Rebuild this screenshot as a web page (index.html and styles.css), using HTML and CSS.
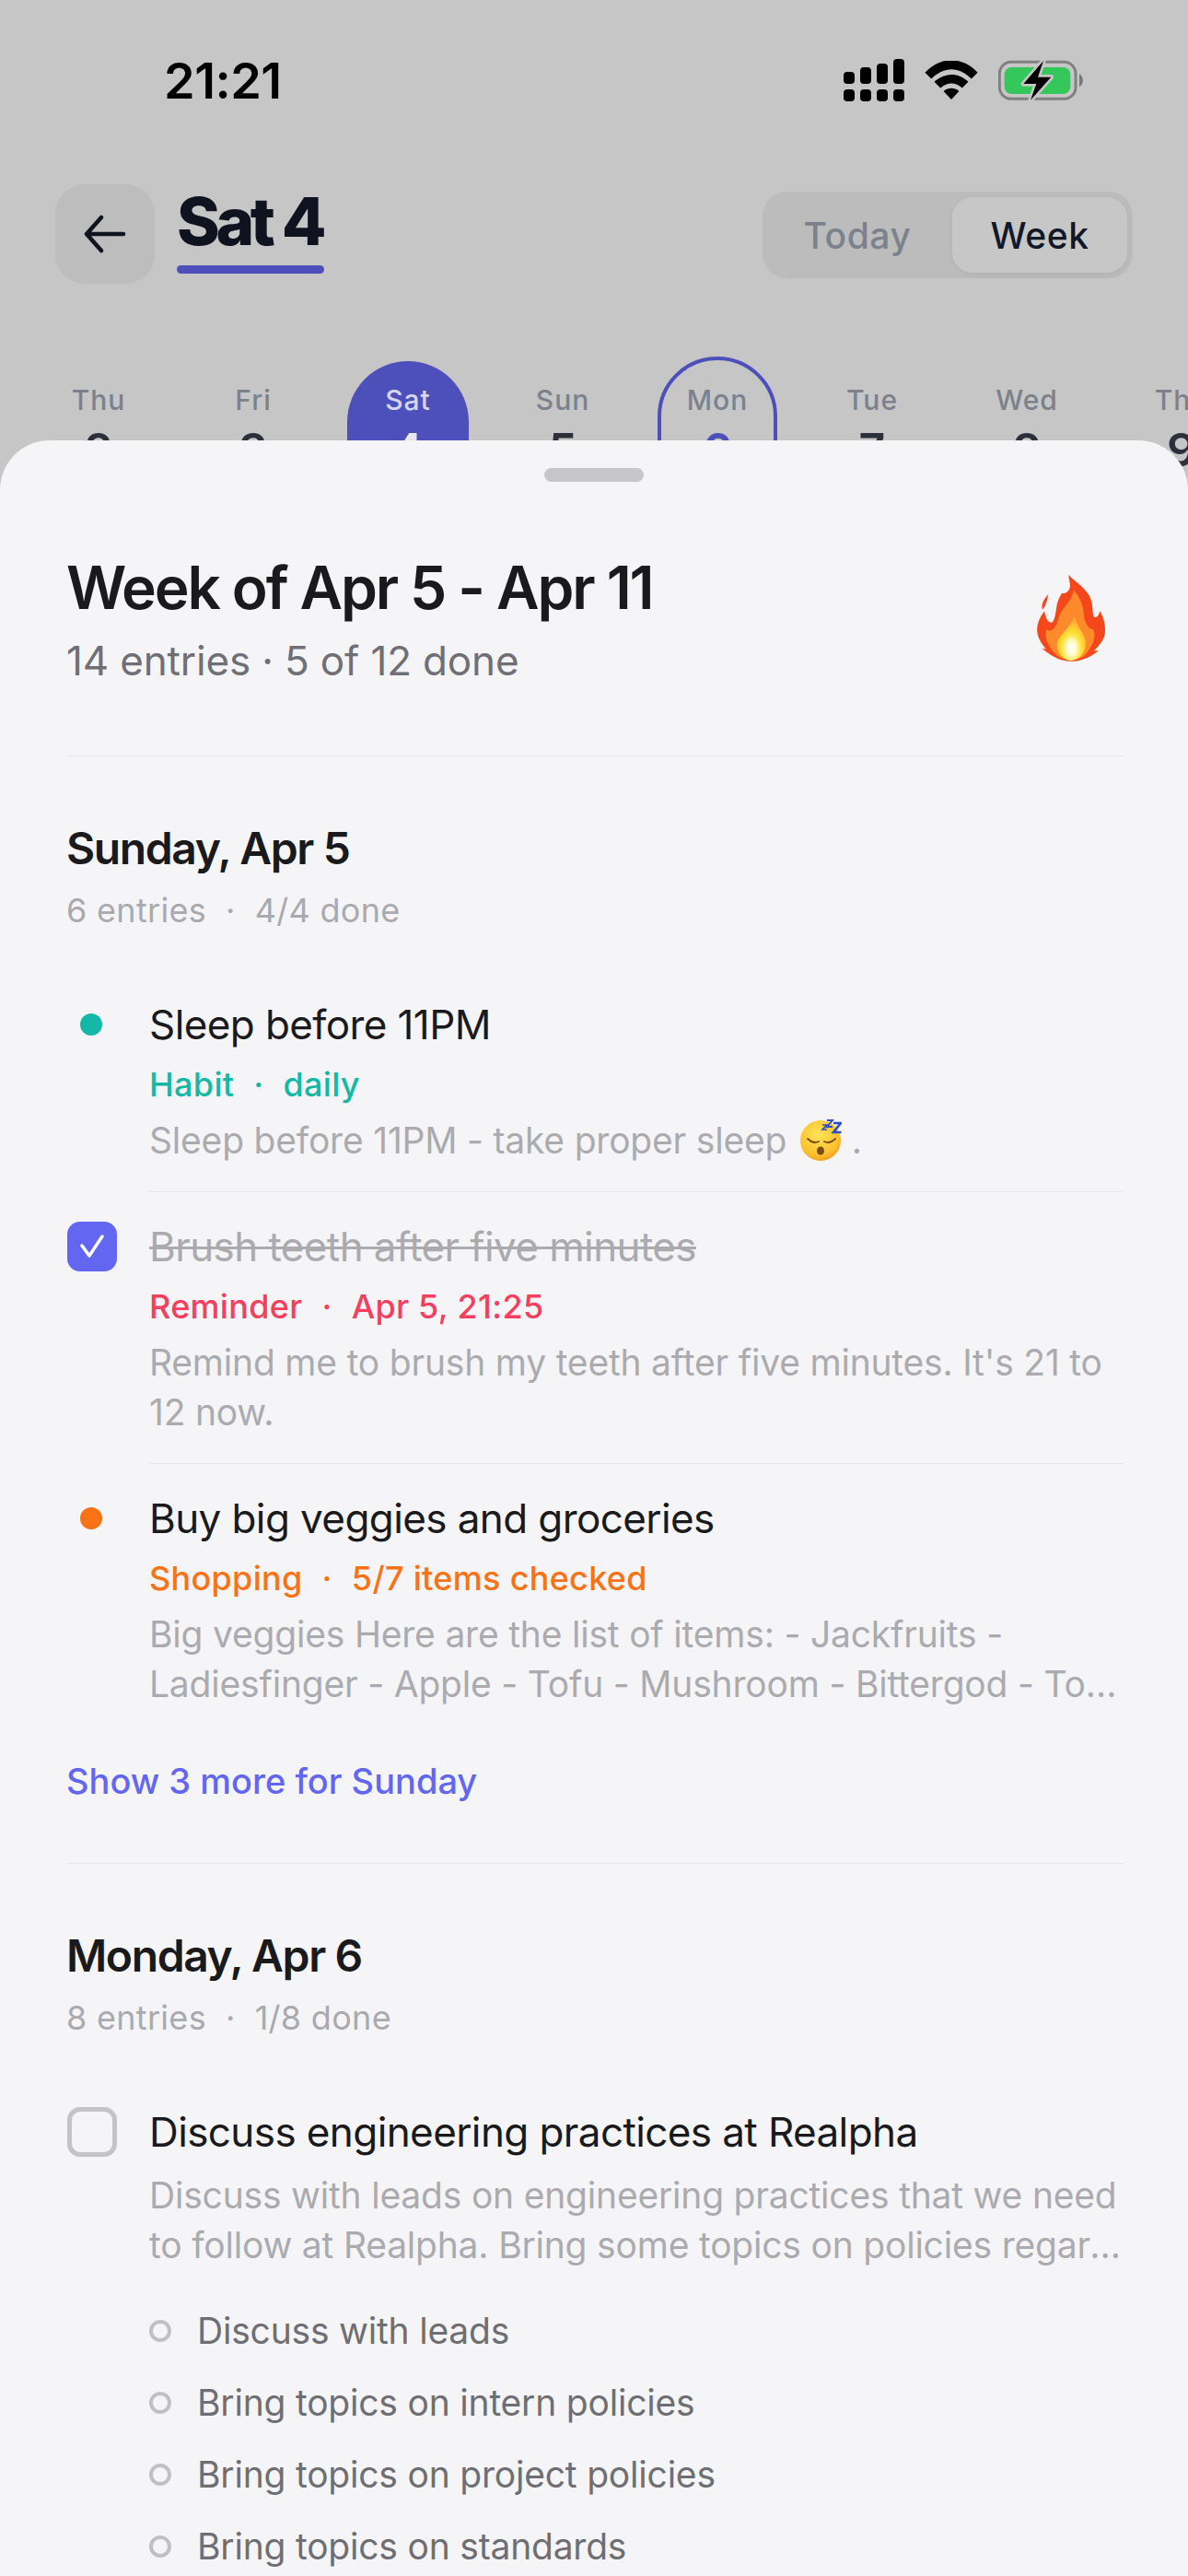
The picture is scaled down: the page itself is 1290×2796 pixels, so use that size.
FILE: index.html
```html
<!DOCTYPE html>
<html lang="en">
<head>
<meta charset="utf-8">
<title>Week</title>
<link rel="stylesheet" href="styles.css">
</head>
<body>
<div class="backdrop">
  <div class="status">
    <span class="time">21:21</span>
    <div class="status-icons">
      <svg class="signal" width="66" height="46" viewBox="0 0 66 46"><g fill="#000"><rect x="0" y="14" width="12" height="13" rx="4"/><rect x="18" y="9" width="12" height="18" rx="4"/><rect x="36" y="5" width="12" height="22" rx="4"/><rect x="54" y="0" width="12" height="27" rx="4"/><rect x="0" y="33" width="12" height="13" rx="4"/><rect x="18" y="33" width="12" height="13" rx="4"/><rect x="36" y="33" width="12" height="13" rx="4"/><rect x="54" y="33" width="12" height="13" rx="4"/></g></svg>
      <svg class="wifi" width="58" height="42" viewBox="492 75 170 125"><g fill="#000"><path d="M492 113C540 60 615 60 662 113L642 133C600 92 555 92 512 133Z"/><path d="M522 143C555 112 600 112 632 143L612 163C590 143 565 143 542 163Z"/><path d="M552 173C567 160 587 160 602 173L577 200Z"/></g></svg>
      <svg class="battery" width="93" height="44" viewBox="733 72 279 132"><rect x="737" y="79" width="248" height="120" rx="38" fill="none" stroke="#808080" stroke-width="9"/><rect x="753" y="96" width="215" height="87" rx="24" fill="#34c759"/><path d="M997 118C1012 125 1012 152 997 160Z" fill="#777"/><path d="M880 75L815 150H857L838 203L905 128H862Z" fill="#000" stroke="#c6c6c6" stroke-width="16" stroke-linejoin="round" paint-order="stroke"/></svg>
    </div>
  </div>
  <div class="topbar">
    <div class="back">
      <svg width="48" height="48" viewBox="0 0 48 48" fill="none" stroke="#0f1320" stroke-width="4.5" stroke-linecap="round" stroke-linejoin="round"><path d="M44 24H4M20 6L4 24L20 42"/></svg>
    </div>
    <div class="day-title">
      <span class="day-title-text">Sat 4</span>
      <span class="day-title-bar"></span>
    </div>
    <div class="segment">
      <span class="seg-item">Today</span>
      <span class="seg-item seg-item--active">Week</span>
    </div>
  </div>
  <div class="strip">
    <div class="day"><span class="day-name">Thu</span><span class="day-num">2</span></div>
    <div class="day"><span class="day-name">Fri</span><span class="day-num">3</span></div>
    <div class="day day--selected"><span class="day-name">Sat</span><span class="day-num">4</span></div>
    <div class="day"><span class="day-name">Sun</span><span class="day-num">5</span></div>
    <div class="day day--today"><span class="day-name">Mon</span><span class="day-num">6</span></div>
    <div class="day"><span class="day-name">Tue</span><span class="day-num">7</span></div>
    <div class="day"><span class="day-name">Wed</span><span class="day-num">8</span></div>
    <div class="day"><span class="day-name">Thu</span><span class="day-num">9</span></div>
  </div>
</div>

<main class="sheet">
  <div class="handle"></div>
  <header class="sheet-head">
    <div>
      <h1 class="sheet-title">Week of Apr 5 - Apr 11</h1>
      <p class="sheet-sub">14 entries · 5 of 12 done</p>
    </div>
    <svg class="fire" width="77" height="95" viewBox="135 68 232 288">
      <defs>
        <radialGradient id="fireCore" cx="0.5" cy="0.72" r="0.62"><stop offset="0" stop-color="#ffffff"/><stop offset="0.28" stop-color="#fffbc8"/><stop offset="0.55" stop-color="#ffe234"/><stop offset="1" stop-color="#ffae2e"/></radialGradient>
      </defs>
      <path fill="#f4481c" d="M242 70C250 85 290 105 310 140C325 170 318 200 325 210C335 212 340 205 345 190C360 215 365 250 360 270C352 295 335 310 325 320L340 320C310 345 280 355 250 355C215 355 185 340 153 312L168 316C150 295 135 270 138 245C140 225 150 205 162 190C165 210 172 228 185 228C195 225 198 200 203 170C208 150 215 135 222 130C228 135 240 128 245 115C250 100 240 85 242 70Z"/>
      <path fill="#f4481c" d="M175 135C172 150 165 180 155 185C150 170 160 150 175 135Z"/>
      <path fill="#ff8a2b" d="M258 120C275 140 292 170 292 205C295 235 312 250 322 250C335 275 320 310 290 340C265 352 225 352 205 338C180 315 160 285 168 250C180 262 200 250 208 215C215 180 250 165 258 120Z"/>
      <path fill="url(#fireCore)" d="M262 208C268 245 300 265 298 300C296 330 275 352 250 353C222 352 202 330 204 298C206 270 235 260 262 208Z"/>
    </svg>
  </header>
  <div class="rule"></div>

  <section class="group">
    <h2 class="group-title">Sunday, Apr 5</h2>
    <p class="group-meta">6 entries<span class="sep">·</span>4/4 done</p>
    <div class="entries">
      <article class="entry">
        <div class="marker"><span class="dot dot--teal"></span></div>
        <div class="entry-body">
          <h3 class="entry-title">Sleep before 11PM</h3>
          <p class="tag tag--teal">Habit<span class="sep">·</span>daily</p>
          <p class="desc">Sleep before 11PM - take proper sleep <svg class="sleepy" width="45" height="46" viewBox="0 0 45 46"><defs><radialGradient id="face" cx="0.45" cy="0.35" r="0.7"><stop offset="0" stop-color="#ffe35a"/><stop offset="0.7" stop-color="#fdc22f"/><stop offset="1" stop-color="#f29a1c"/></radialGradient></defs><circle cx="22" cy="24" r="22" fill="url(#face)"/><g fill="none" stroke="#7a4a12" stroke-width="1.8" stroke-linecap="round"><path d="M8 22Q14 28 20 25"/><path d="M26 25Q32 28 38 22"/></g><ellipse cx="22" cy="35" rx="4" ry="4.5" fill="#7a4a12"/><g fill="none" stroke="#2a4fc9" stroke-linejoin="miter"><path d="M24 7H29L24 12H29" stroke-width="1.6"/><path d="M29 2H35L29 9H35" stroke-width="1.9"/><path d="M36 5H44L36 15H44.5" stroke-width="2.6"/></g></svg> .</p>
        </div>
      </article>
      <article class="entry entry--done">
        <div class="marker"><span class="check check--on"><svg width="26" height="26" viewBox="0 0 26 26" fill="none" stroke="#fff" stroke-width="3.5" stroke-linecap="round" stroke-linejoin="round"><path d="M2 12L10 23L24 2"/></svg></span></div>
        <div class="entry-body">
          <h3 class="entry-title entry-title--struck">Brush teeth after five minutes</h3>
          <p class="tag tag--red">Reminder<span class="sep">·</span>Apr 5, 21:25</p>
          <p class="desc">Remind me to brush my teeth after five minutes. It's 21 to 12 now.</p>
        </div>
      </article>
      <article class="entry">
        <div class="marker"><span class="dot dot--orange"></span></div>
        <div class="entry-body">
          <h3 class="entry-title">Buy big veggies and groceries</h3>
          <p class="tag tag--orange">Shopping<span class="sep">·</span>5/7 items checked</p>
          <p class="desc"><span class="desc-line">Big veggies Here are the list of items: - Jackfruits -</span><span class="desc-line">Ladiesfinger - Apple - Tofu - Mushroom - Bittergod - Tomatoes - Onions</span></p>
        </div>
      </article>
    </div>
    <p class="more">Show 3 more for Sunday</p>
  </section>
  <div class="rule rule--after-group"></div>

  <section class="group">
    <h2 class="group-title">Monday, Apr 6</h2>
    <p class="group-meta">8 entries<span class="sep">·</span>1/8 done</p>
    <div class="entries">
      <article class="entry">
        <div class="marker"><span class="check"></span></div>
        <div class="entry-body">
          <h3 class="entry-title">Discuss engineering practices at Realpha</h3>
          <p class="desc"><span class="desc-line">Discuss with leads on engineering practices that we need</span><span class="desc-line">to follow at Realpha. Bring some topics on policies regarding the interns</span></p>
          <ul class="subs">
            <li class="sub">Discuss with leads</li>
            <li class="sub">Bring topics on intern policies</li>
            <li class="sub">Bring topics on project policies</li>
            <li class="sub">Bring topics on standards</li>
          </ul>
        </div>
      </article>
    </div>
  </section>
</main>
</body>
</html>
```

FILE: styles.css
```css
*, *::before { box-sizing: border-box; }
html, body { margin: 0; padding: 0; }
body {
  width: 1290px;
  height: 2796px;
  overflow: hidden;
  background: #c6c6c6;
  font-family: Inter, "Noto Sans", sans-serif;
}
h1, h2, h3, p, ul { margin: 0; padding: 0; }

.backdrop { height: 478px; }

.status {
  height: 176px;
  display: flex;
  align-items: center;
  justify-content: space-between;
  padding: 0 113px 2px 178px;
}
.time { font-size: 54px; font-weight: 600; color: #000; letter-spacing: -0.5px; }
.status-icons { display: flex; align-items: center; gap: 22px; }

.topbar {
  margin-top: 24px;
  height: 108px;
  padding: 0 60px 0 60px;
  display: flex;
  align-items: flex-start;
}
.back {
  width: 108px;
  height: 108px;
  border-radius: 32px;
  background: #bdbdbd;
  display: flex;
  align-items: center;
  justify-content: center;
}
.day-title { margin-left: 24px; width: 160px; display: flex; flex-direction: column; }
.day-title-text {
  font-size: 71px;
  line-height: 80px;
  font-weight: 800;
  letter-spacing: -4.4px;
  color: #0f1320;
  white-space: nowrap;
}
.day-title-bar { margin-top: 8px; height: 9px; border-radius: 5px; background: #4d4fbb; }
.segment {
  margin-left: auto;
  margin-top: 8px;
  width: 402px;
  height: 94px;
  padding: 6px 6px 6px 0;
  border-radius: 26px;
  background: #bcbcbc;
  display: flex;
}
.seg-item {
  flex: 1;
  display: flex;
  align-items: center;
  justify-content: center;
  font-size: 39px;
  font-weight: 500;
  letter-spacing: 0.6px;
  color: #7b818d;
}
.seg-item--active {
  flex: 0 0 190px;
  border-radius: 22px;
  background: #c7c7c7;
  color: #111827;
  box-shadow: 0 2px 6px rgba(0, 0, 0, 0.06);
}

.strip {
  margin-top: 84px;
  padding-left: 41px;
  display: flex;
  gap: 36px;
}
.day {
  flex: 0 0 132px;
  height: 200px;
  padding-top: 26px;
  border-radius: 66px;
  display: flex;
  flex-direction: column;
  align-items: center;
}
.day-name {
  font-size: 30px;
  line-height: 32px;
  font-weight: 500;
  letter-spacing: 1px;
  color: #7b818d;
}
.day-num {
  margin-top: 8px;
  font-size: 50px;
  line-height: 60px;
  font-weight: 600;
  color: #2c303a;
}
.day--selected { background: #4d4fbb; }
.day--selected .day-name { color: #d5d6ee; }
.day--selected .day-num { color: #e8e8f4; }
.day--today {
  flex-basis: 130px;
  margin: -5px 1px 0;
  padding-top: 27px;
  border: 4px solid #4d4fbb;
}
.day--today .day-num { color: #4d4fbb; }

.sheet {
  position: relative;
  height: 2318px;
  padding: 30px 70px 0 72px;
  border-radius: 54px 54px 0 0;
  background: #f5f5f8;
}
.handle {
  width: 108px;
  height: 15px;
  margin: 0 auto 0 519px;
  border-radius: 8px;
  background: #c6c6cb;
}
.sheet-head {
  margin-top: 79px;
  display: flex;
  justify-content: space-between;
  align-items: flex-start;
}
.sheet-title {
  font-size: 64px;
  line-height: 72px;
  font-weight: 600;
  letter-spacing: -2.1px;
  color: #1a1a1c;
}
.sheet-sub {
  margin-top: 15px;
  font-size: 44px;
  line-height: 56px;
  letter-spacing: -0.15px;
  color: #6f6f75;
}
.fire { margin: 21px 18px 0 0; }
.rule { margin: 75px 0 0 1px; height: 1px; background: #e6e6ea; }
.rule--after-group { margin-top: 64px; }
.rule + .group { margin-top: 70px; }

.group-title {
  font-size: 48px;
  line-height: 60px;
  font-weight: 600;
  letter-spacing: -1.4px;
  color: #1a1a1c;
}
.group-meta {
  margin-top: 15px;
  font-size: 36px;
  line-height: 44px;
  letter-spacing: 0.3px;
  color: #a9a9ae;
}
.sep { margin: 0 21px; }
.entries { margin-top: 72px; }
.entry { display: flex; }
.marker {
  flex: 0 0 90px;
  height: 60px;
  display: flex;
  align-items: center;
}
.dot { width: 24px; height: 24px; margin-left: 15px; border-radius: 50%; }
.dot--teal { background: #14b8a6; }
.dot--orange { background: #f97316; }
.check {
  width: 54px;
  height: 54px;
  margin-left: 1px;
  border: 5px solid #c4c4c6;
  border-radius: 14px;
  display: flex;
  align-items: center;
  justify-content: center;
}
.check--on { border: 0; background: #6366f1; }
.entry-body { flex: 1; min-width: 0; padding-bottom: 28px; }
.entry:last-child .entry-body { padding-bottom: 0; }
.entry + .entry .entry-body { padding-top: 29px; border-top: 1px solid #e6e6ea; }
.entry + .entry .marker { margin-top: 30px; }
.entry-title {
  font-size: 44px;
  line-height: 60px;
  font-weight: 400;
  letter-spacing: -0.6px;
  color: #1a1a1c;
}
.entry-title--struck { color: #ababaf; text-decoration: line-through; text-decoration-thickness: 3px; }
.tag {
  margin-top: 13px;
  font-size: 36px;
  line-height: 44px;
  font-weight: 500;
  letter-spacing: 0.3px;
}
.tag--teal { color: #14b8a6; }
.tag--red { color: #f43f5e; }
.tag--orange { color: #f97316; }
.desc {
  margin-top: 12px;
  font-size: 39px;
  line-height: 54px;
  letter-spacing: -0.2px;
  color: #ababaf;
}
.desc-line {
  display: block;
  white-space: nowrap;
  overflow: hidden;
  text-overflow: ellipsis;
}
.sleepy { vertical-align: -8px; margin-left: 4px; }
.more {
  margin-top: 53px;
  font-size: 38px;
  line-height: 50px;
  font-weight: 500;
  color: #6366f1;
}
.subs {
  margin-top: 36px;
  list-style: none;
  display: flex;
  flex-direction: column;
  gap: 18px;
}
.sub {
  display: flex;
  align-items: center;
  gap: 28px;
  font-size: 39px;
  line-height: 60px;
  letter-spacing: -0.2px;
  color: #6e6e73;
}
.sub::before {
  content: "";
  flex: 0 0 24px;
  height: 24px;
  border: 4px solid #c0c0c3;
  border-radius: 50%;
}
```
